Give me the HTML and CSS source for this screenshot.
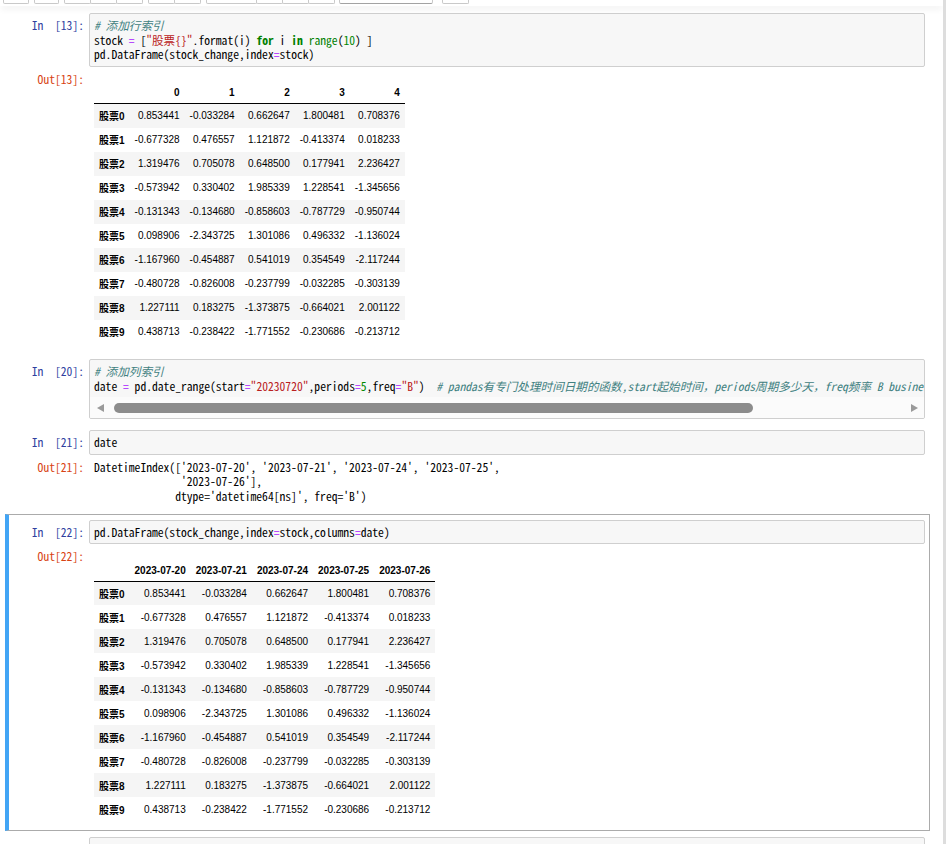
FILE: index.html
```html
<!DOCTYPE html>
<html lang="zh">
<head>
<meta charset="utf-8">
<title>Notebook</title>
<link rel="stylesheet" href="styles.css">
</head>
<body>
<div class="page">
  <div class="header">
    <div class="tb-group g1"><span class="tb" style="width:24px"></span></div>
    <div class="tb-group g2"><span class="tb" style="width:23px"></span></div>
    <div class="tb-group g3"><span class="tb" style="width:25px"></span><span class="tb" style="width:25px"></span><span class="tb" style="width:25px"></span></div>
    <div class="tb-group g4"><span class="tb" style="width:25px"></span><span class="tb" style="width:25px"></span></div>
    <div class="tb-group g5"><span class="tb" style="width:49px"></span><span class="tb" style="width:25px"></span><span class="tb" style="width:25px"></span><span class="tb" style="width:25px"></span></div>
    <div class="tb-group g6"><span class="tb sel" style="width:92px"></span></div>
    <div class="tb-group g7"><span class="tb" style="width:25px"></span></div>
  </div>

  <div class="notebook">
    <!-- cell 13 -->
    <div class="cell">
      <div class="row">
        <div class="prompt in">In&nbsp;&nbsp;[13]:</div>
        <div class="area"><div class="code">
<div class="ln"><span class="c"># 添加行索引</span></div>
<div class="ln">stock <span class="o">=</span> [<span class="s">"股票{}"</span>.format(i) <span class="k">for</span> i <span class="k">in</span> <span class="b">range</span>(<span class="m">10</span>) ]</div>
<div class="ln">pd.DataFrame(stock_change,index<span class="o">=</span>stock)</div>
        </div></div>
      </div>
      <div class="row">
        <div class="prompt out">Out[13]:</div>
        <div class="sub">
          <table class="df">
            <thead><tr><th></th><th>0</th><th>1</th><th>2</th><th>3</th><th>4</th></tr></thead>
            <tbody>
              <tr><th>股票0</th><td>0.853441</td><td>-0.033284</td><td>0.662647</td><td>1.800481</td><td>0.708376</td></tr>
              <tr><th>股票1</th><td>-0.677328</td><td>0.476557</td><td>1.121872</td><td>-0.413374</td><td>0.018233</td></tr>
              <tr><th>股票2</th><td>1.319476</td><td>0.705078</td><td>0.648500</td><td>0.177941</td><td>2.236427</td></tr>
              <tr><th>股票3</th><td>-0.573942</td><td>0.330402</td><td>1.985339</td><td>1.228541</td><td>-1.345656</td></tr>
              <tr><th>股票4</th><td>-0.131343</td><td>-0.134680</td><td>-0.858603</td><td>-0.787729</td><td>-0.950744</td></tr>
              <tr><th>股票5</th><td>0.098906</td><td>-2.343725</td><td>1.301086</td><td>0.496332</td><td>-1.136024</td></tr>
              <tr><th>股票6</th><td>-1.167960</td><td>-0.454887</td><td>0.541019</td><td>0.354549</td><td>-2.117244</td></tr>
              <tr><th>股票7</th><td>-0.480728</td><td>-0.826008</td><td>-0.237799</td><td>-0.032285</td><td>-0.303139</td></tr>
              <tr><th>股票8</th><td>1.227111</td><td>0.183275</td><td>-1.373875</td><td>-0.664021</td><td>2.001122</td></tr>
              <tr><th>股票9</th><td>0.438713</td><td>-0.238422</td><td>-1.771552</td><td>-0.230686</td><td>-0.213712</td></tr>
            </tbody>
          </table>
        </div>
      </div>
    </div>

    <!-- cell 20 -->
    <div class="cell">
      <div class="row">
        <div class="prompt in">In&nbsp;&nbsp;[20]:</div>
        <div class="area scroll"><div class="code">
<div class="ln"><span class="c"># 添加列索引</span></div>
<div class="ln">date <span class="o">=</span> pd.date_range(start<span class="o">=</span><span class="s">"20230720"</span>,periods<span class="o">=</span><span class="m">5</span>,freq<span class="o">=</span><span class="s">"B"</span>)  <span class="c"># pandas有专门处理时间日期的函数,start起始时间，periods周期多少天，freq频率 B business day</span></div>
          </div>
          <div class="hscroll">
            <span class="arrow left"></span>
            <span class="thumb"></span>
            <span class="track"></span>
            <span class="arrow right"></span>
          </div>
        </div>
      </div>
    </div>

    <!-- cell 21 -->
    <div class="cell">
      <div class="row">
        <div class="prompt in">In&nbsp;&nbsp;[21]:</div>
        <div class="area"><div class="code">
<div class="ln">date</div>
        </div></div>
      </div>
      <div class="row">
        <div class="prompt out">Out[21]:</div>
        <div class="sub">
<pre class="text">DatetimeIndex(['2023-07-20', '2023-07-21', '2023-07-24', '2023-07-25',
               '2023-07-26'],
              dtype='datetime64[ns]', freq='B')</pre>
        </div>
      </div>
    </div>

    <!-- cell 22 -->
    <div class="cell selected">
      <div class="row">
        <div class="prompt in">In&nbsp;&nbsp;[22]:</div>
        <div class="area"><div class="code">
<div class="ln">pd.DataFrame(stock_change,index<span class="o">=</span>stock,columns<span class="o">=</span>date)</div>
        </div></div>
      </div>
      <div class="row">
        <div class="prompt out">Out[22]:</div>
        <div class="sub">
          <table class="df">
            <thead><tr><th></th><th>2023-07-20</th><th>2023-07-21</th><th>2023-07-24</th><th>2023-07-25</th><th>2023-07-26</th></tr></thead>
            <tbody>
              <tr><th>股票0</th><td>0.853441</td><td>-0.033284</td><td>0.662647</td><td>1.800481</td><td>0.708376</td></tr>
              <tr><th>股票1</th><td>-0.677328</td><td>0.476557</td><td>1.121872</td><td>-0.413374</td><td>0.018233</td></tr>
              <tr><th>股票2</th><td>1.319476</td><td>0.705078</td><td>0.648500</td><td>0.177941</td><td>2.236427</td></tr>
              <tr><th>股票3</th><td>-0.573942</td><td>0.330402</td><td>1.985339</td><td>1.228541</td><td>-1.345656</td></tr>
              <tr><th>股票4</th><td>-0.131343</td><td>-0.134680</td><td>-0.858603</td><td>-0.787729</td><td>-0.950744</td></tr>
              <tr><th>股票5</th><td>0.098906</td><td>-2.343725</td><td>1.301086</td><td>0.496332</td><td>-1.136024</td></tr>
              <tr><th>股票6</th><td>-1.167960</td><td>-0.454887</td><td>0.541019</td><td>0.354549</td><td>-2.117244</td></tr>
              <tr><th>股票7</th><td>-0.480728</td><td>-0.826008</td><td>-0.237799</td><td>-0.032285</td><td>-0.303139</td></tr>
              <tr><th>股票8</th><td>1.227111</td><td>0.183275</td><td>-1.373875</td><td>-0.664021</td><td>2.001122</td></tr>
              <tr><th>股票9</th><td>0.438713</td><td>-0.238422</td><td>-1.771552</td><td>-0.230686</td><td>-0.213712</td></tr>
            </tbody>
          </table>
        </div>
      </div>
    </div>

    <!-- empty cell -->
    <div class="cell">
      <div class="row">
        <div class="prompt in">In&nbsp;&nbsp;[&nbsp;]:</div>
        <div class="area"><div class="code">
<div class="ln"> </div>
        </div></div>
      </div>
    </div>
  </div>
</div>
</body>
</html>
```

FILE: styles.css
```css
html, body {
  margin: 0;
  padding: 0;
  background: #fff;
  overflow: hidden;
}

.page {
  width: 946px;
  height: 844px;
  box-sizing: border-box;
  border-right: 3px solid #dddddd;
  overflow: hidden;
  background: #fff;
}

/* ---------- toolbar remnant ---------- */
.header {
  height: 6px;
  display: flex;
  align-items: flex-start;
  background: #fff;
  position: relative;
  z-index: 2;
  box-shadow: 0 4px 6px -1px rgba(0, 0, 0, 0.07);
}
.tb-group { display: flex; }
.g1 { margin-left: 3px; }
.g2 { margin-left: 5px; }
.g3 { margin-left: 5px; }
.g4 { margin-left: 5px; }
.g5 { margin-left: 5px; }
.g6 { margin-left: 4px; }
.g7 { margin-left: 9px; }
.tb {
  display: block;
  height: 3px;
  border: 1px solid #c9c9c9;
  border-top: 0;
  border-radius: 0 0 2px 2px;
  background: #fff;
}
.tb + .tb { margin-left: -1px; }
.tb.sel { border-bottom-color: #a3a3a3; }

/* ---------- notebook ---------- */
.notebook {
  padding: 1.5px 0 0 5px;
}

.cell {
  width: 925px;
  box-sizing: border-box;
  border: 1px solid transparent;
  padding: 4.5px;
}
.cell.selected {
  border-color: #ababab;
  border-left: 4px solid #42a5f5;
  padding-left: 1.5px;
}

.row {
  display: flex;
  align-items: flex-start;
}

.prompt,
.code,
.text {
  font-family: "Noto Sans Mono CJK SC", "Liberation Mono", "Noto Sans CJK SC", monospace;
  font-size: 11.6px;
  line-height: 14.5px;
}

.prompt {
  width: 78.5px;
  flex: none;
  box-sizing: border-box;
  padding: 5px 5px 0 0;
  text-align: right;
  white-space: pre;
}
.prompt.in { color: #303f9f; }
.prompt.out { color: #d84315; }

.area {
  flex: 1;
  min-width: 0;
  border: 1px solid #cfcfcf;
  border-radius: 2px;
  background: #f7f7f7;
  overflow: hidden;
}
.code {
  padding: 4px;
  color: #000;
}
.ln {
  white-space: pre;
  height: 14.5px;
}

.c { color: #408080; font-style: italic; }
.o { color: #aa22ff; }
.s { color: #ba2121; }
.k { color: #008000; font-weight: bold; }
.b { color: #008000; }
.m { color: #008800; }

/* horizontal scrollbar of cell 20 */
.hscroll {
  height: 21px;
  background: #fbfbfb;
  display: flex;
  align-items: center;
  padding: 0 6px 0 7px;
}
.arrow {
  width: 0;
  height: 0;
  border-top: 4px solid transparent;
  border-bottom: 4px solid transparent;
  flex: none;
}
.arrow.left { border-right: 7px solid #9a9a9a; }
.arrow.right { border-left: 7px solid #9a9a9a; }
.thumb {
  width: 639px;
  height: 10px;
  margin-left: 10px;
  border-radius: 5px;
  background: #8c8c8c;
  flex: none;
}
.track { flex: 1; }

/* ---------- output ---------- */
.sub {
  flex: 1;
  min-width: 0;
  padding: 5px 5px 4.5px;
  overflow: hidden;
}

.text {
  margin: 0 0 1px;
  color: #000;
  white-space: pre;
}

.df {
  margin-top: 8.5px;
  border-collapse: collapse;
  border-spacing: 0;
  font-family: "Liberation Sans", "Noto Sans CJK SC", sans-serif;
  font-size: 10px;
  color: #000;
}
.df th,
.df td {
  padding: 0 5px;
  text-align: right;
  vertical-align: middle;
  white-space: nowrap;
}
.df thead th {
  height: 18px;
  padding-bottom: 5px;
  vertical-align: bottom;
  font-weight: bold;
  border-bottom: 1px solid #000;
}
.df tbody tr { height: 24px; }
.df tbody tr:nth-child(odd) { background: #f5f5f5; }
.df tbody th { font-weight: bold; }
```
